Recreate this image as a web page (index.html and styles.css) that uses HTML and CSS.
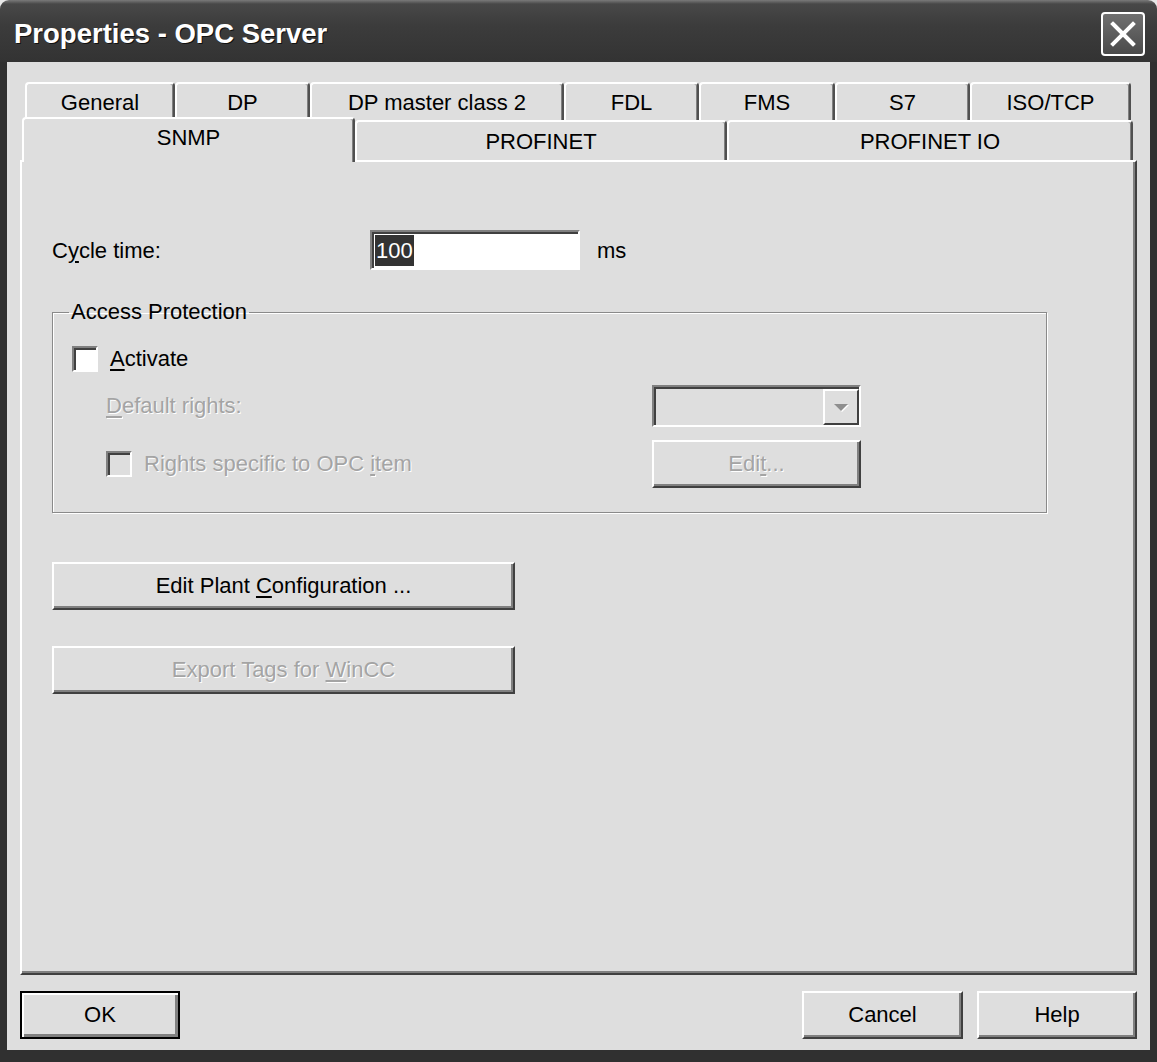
FILE: index.html
```html
<!DOCTYPE html>
<html lang="en">

<head>
  <meta charset="UTF-8" />
  <title>Properties - OPC Server</title>
  <link rel="stylesheet" href="styles.css">
</head>

<body>

  <div class="window">
    <div class="titlebar">
      <span class="title">Properties - OPC Server</span>
      <span class="close">
        <svg width="28" height="28" viewBox="0 0 28 28">
          <path d="M4 4 L24 24 M24 4 L4 24" stroke="#fff" stroke-width="4" stroke-linecap="square" />
        </svg>
      </span>
    </div>

    <div class="frame">

      <!-- Tabs -->
      <div class="tabs">
        <div class="tab-row back">
          <div class="tab">General</div>
          <div class="tab">DP</div>
          <div class="tab">DP master class 2</div>
          <div class="tab">FDL</div>
          <div class="tab">FMS</div>
          <div class="tab">S7</div>
          <div class="tab">ISO/TCP</div>
        </div>
        <div class="tab-row front">
          <div class="tab active">SNMP</div>
          <div class="tab">PROFINET</div>
          <div class="tab">PROFINET IO</div>
        </div>
      </div>

      <div class="panel">
        <div class="field-row">
          <label class="field-label">C<u>y</u>cle time:</label>
          <div class="textbox"><span class="sel">100</span></div>
          <span class="unit">ms</span>
        </div>

        <fieldset class="group">
          <legend>Access Protection</legend>

          <div class="grp-row first">
            <div class="check-label">
              <span class="check"></span>
              <span><u>A</u>ctivate</span>
            </div>
          </div>

          <div class="grp-row combo-row">
            <div class="indent disabled"><u>D</u>efault rights:</div>
            <div class="combo">
              <span class="combo-btn"><span class="arrow"></span></span>
            </div>
          </div>

          <div class="grp-row button-row">
            <div class="indent check-label">
              <span class="check off"></span>
              <span class="disabled">Rights specific to OPC <u>i</u>tem</span>
            </div>
            <button class="btn small disabled"><span>Edi<u>t</u>...</span></button>
          </div>
        </fieldset>

        <button class="btn wide plant"><span>Edit Plant <u>C</u>onfiguration ...</span></button>
        <button class="btn wide export disabled"><span>Export Tags for <u>W</u>inCC</span></button>
      </div>

      <div class="actions">
        <button class="btn default"><span>OK</span></button>
        <div class="actions-right">
          <button class="btn cancel"><span>Cancel</span></button>
          <button class="btn help"><span>Help</span></button>
        </div>
      </div>

    </div>
  </div>

</body>
</html>
```

FILE: styles.css
```css
:root {
  --face: #dedede;
  --shadow: #808080;
  --dark: #404040;
  --light: #ffffff;
  --frame: #303030;
}

* {
  margin: 0;
  padding: 0;
  box-sizing: border-box;
}

body {
  width: 1157px;
  height: 1062px;
  overflow: hidden;
  background: #e8e8e8;
  font-family: 'Liberation Sans', Arial, sans-serif;
  font-size: 22px;
  color: #000;
}

u {
  text-underline-offset: 3px;
}

.window {
  height: 1062px;
  display: flex;
  flex-direction: column;
}

/* Title bar */
.titlebar {
  height: 62px;
  display: flex;
  justify-content: space-between;
  align-items: center;
  padding: 5px 12px 0 14px;
  background: linear-gradient(#7a7a7a 0, #484848 4px, #3c3c3c 40%, #333333 100%);
  border-radius: 9px 9px 0 0;
}

.title {
  color: #ffffff;
  font-weight: bold;
  font-size: 27.5px;
  text-shadow: 1px 1px 0 #111;
}

.close {
  width: 44px;
  height: 44px;
  border: 2px solid #ffffff;
  border-radius: 4px;
  background: linear-gradient(#707070, #4a4a4a);
  display: flex;
  align-items: center;
  justify-content: center;
}

/* Window body */
.frame {
  flex-grow: 1;
  display: flex;
  flex-direction: column;
  background: var(--face);
  border-left: 7px solid var(--frame);
  border-right: 7px solid var(--frame);
  border-bottom: 12px solid var(--frame);
  padding: 20px 13px 0;
}

.tabs {
  display: flex;
  flex-direction: column;
}

.tab-row {
  display: grid;
}

.tab-row.back {
  height: 38px;
  margin-left: 5px;
  grid-template-columns: 150px 135px 254px 135px 136px 135px 161px;
}

.tab-row.front {
  height: 40px;
  margin-left: 2px;
  grid-template-columns: 333px 372px 406px;
}

.tab {
  display: flex;
  justify-content: center;
  align-items: center;
  padding-top: 2px;
  border-top: 2px solid var(--light);
  border-left: 2px solid var(--light);
  border-right: 2px solid #505050;
  box-shadow: inset -1px 0 0 var(--shadow);
  border-radius: 4px 4px 0 0;
  background: var(--face);
}

.tab.active {
  position: relative;
  z-index: 1;
  margin-top: -3px;
  margin-bottom: -2px;
  padding-top: 0;
  padding-bottom: 5px;
}

.panel {
  height: 815px;
  border-top: 2px solid var(--light);
  border-left: 2px solid var(--light);
  border-right: 2px solid var(--dark);
  border-bottom: 2px solid var(--dark);
  box-shadow: inset -2px -2px 0 var(--shadow);
  padding: 68px 0 0 30px;
  display: flex;
  flex-direction: column;
  align-items: flex-start;
}

.field-row {
  display: flex;
  align-items: center;
  height: 40px;
}

.field-label {
  width: 318px;
  padding-top: 2px;
}

.textbox {
  width: 210px;
  height: 40px;
  display: flex;
  align-items: center;
  padding-left: 3px;
  background: #ffffff;
  border-top: 2px solid var(--shadow);
  border-left: 2px solid var(--shadow);
  border-right: 2px solid var(--light);
  border-bottom: 2px solid var(--light);
  box-shadow: inset 2px 2px 0 var(--dark);
}

.sel {
  background: #333333;
  color: #ffffff;
  line-height: 31px;
  padding: 0 1px;
}

.unit {
  margin-left: 17px;
  padding-top: 2px;
}

/* Group box */
.group {
  margin-top: 30px;
  width: 995px;
  border: 1px solid #8a8a8a;
  box-shadow: inset 1px 1px 0 var(--light), 1px 1px 0 var(--light);
  padding: 0 0 24px 19px;
}

.group legend {
  margin-left: -3px;
  padding: 0 2px;
  line-height: 24px;
}

.grp-row {
  display: grid;
  grid-template-columns: 580px 209px;
  align-items: center;
  margin-top: 13px;
}

.grp-row.first {
  margin-top: 22px;
  height: 26px;
}

.grp-row.combo-row {
  height: 42px;
}

.grp-row.button-row {
  height: 48px;
}

.indent {
  padding-left: 34px;
}

.check-label {
  display: flex;
  align-items: center;
  gap: 12px;
}

.check {
  width: 26px;
  height: 26px;
  background: #ffffff;
  border-top: 2px solid var(--shadow);
  border-left: 2px solid var(--shadow);
  border-right: 2px solid var(--light);
  border-bottom: 2px solid var(--light);
  box-shadow: inset 2px 2px 0 var(--dark);
}

.check.off {
  background: var(--face);
}

.disabled {
  color: #a4a4a4;
  text-shadow: 1px 1px 0 #ffffff;
}

.combo {
  height: 42px;
  display: flex;
  justify-content: flex-end;
  background: var(--face);
  border-top: 2px solid var(--shadow);
  border-left: 2px solid var(--shadow);
  border-right: 2px solid var(--light);
  border-bottom: 2px solid var(--light);
  box-shadow: inset 2px 2px 0 var(--dark);
  padding: 2px 0 0 2px;
}

.combo-btn {
  width: 36px;
  display: flex;
  justify-content: center;
  align-items: center;
  border-top: 2px solid var(--light);
  border-left: 2px solid var(--light);
  border-right: 2px solid var(--dark);
  border-bottom: 2px solid var(--dark);
}

.arrow {
  width: 0;
  height: 0;
  border-left: 7px solid transparent;
  border-right: 7px solid transparent;
  border-top: 7px solid #8e8e8e;
  filter: drop-shadow(1px 1px 0 #ffffff);
}

/* Buttons */
.btn {
  font: inherit;
  color: #000;
  background: var(--face);
  border-top: 2px solid var(--light);
  border-left: 2px solid var(--light);
  border-right: 2px solid var(--dark);
  border-bottom: 2px solid var(--dark);
  box-shadow: inset -2px -2px 0 var(--shadow);
  height: 48px;
  display: flex;
  justify-content: center;
  align-items: center;
}

.btn.disabled {
  color: #a4a4a4;
  text-shadow: 1px 1px 0 #ffffff;
}

.btn.small {
  width: 209px;
}

.btn.wide {
  width: 463px;
}

.btn.plant {
  margin-top: 49px;
}

.btn.export {
  margin-top: 36px;
}

.actions {
  display: flex;
  justify-content: space-between;
  margin-top: 16px;
}

.actions-right {
  display: flex;
  gap: 14px;
}

.btn.default {
  width: 160px;
  border: 2px solid #000;
  box-shadow: inset 2px 2px 0 var(--light), inset -3px -3px 0 var(--shadow);
}

.btn.cancel {
  width: 161px;
}

.btn.help {
  width: 160px;
}
```
